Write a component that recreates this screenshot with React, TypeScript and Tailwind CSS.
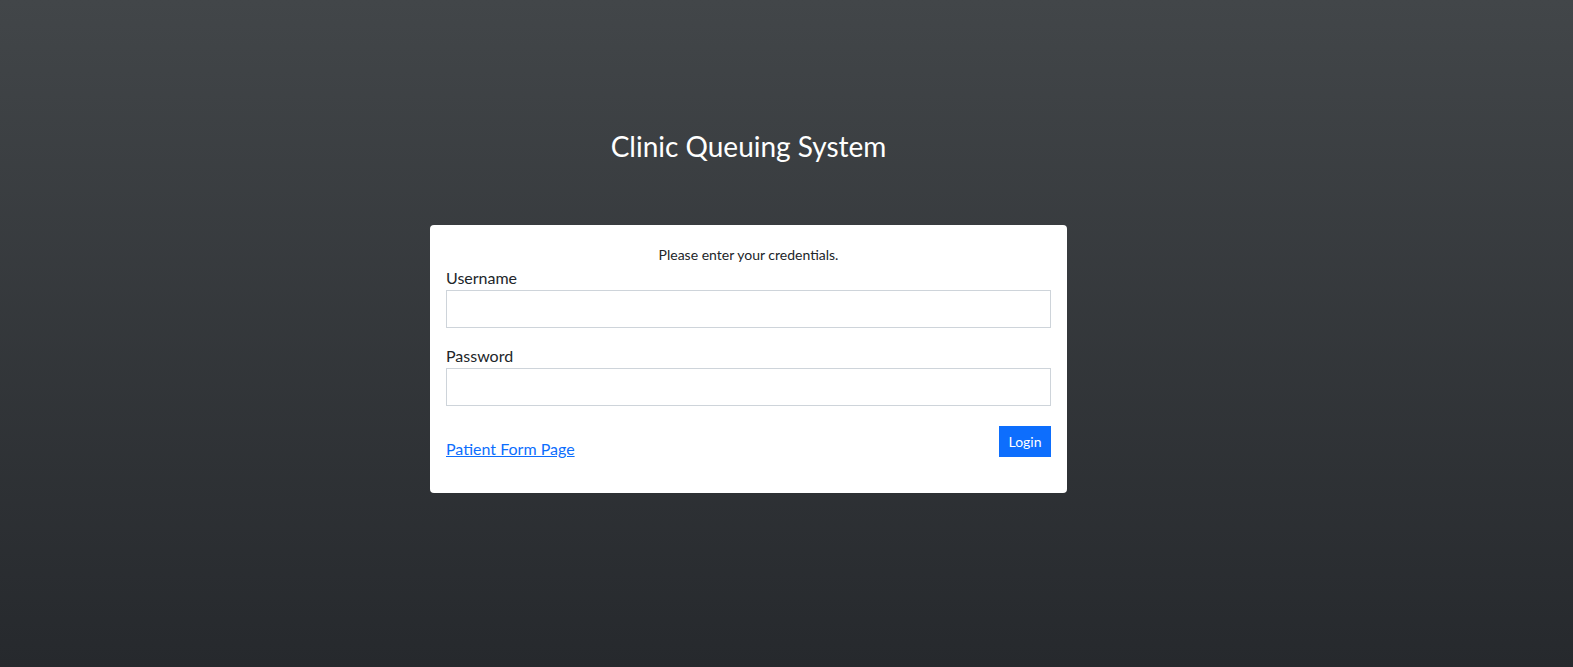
// Clinic Queuing System – login page

export default function App() {
  return (
    <div
      className="h-screen w-full bg-linear-to-b/srgb from-[#424649] to-[#26292d] text-[#212529]"
      style={{ fontFamily: 'Lato, "Noto Sans", sans-serif' }}
    >
      <div className="ml-[430px] w-[637px] pt-[129px]">
        <h3 className="text-center text-[28px] leading-[34px] font-normal text-white">
          Clinic Queuing System
        </h3>

        {/* Card */}
        <div className="mt-[62px] rounded bg-white px-4 pt-[19px] pb-[32px]">
          <p className="text-center text-sm leading-[21px]">Please enter your credentials.</p>

          <div className="mt-[1px]">
            <label className="block text-base leading-6">Username</label>
            <input
              type="text"
              className="block h-[38px] w-full border border-[#ced4da] bg-white px-3 outline-none"
            />
          </div>

          <div className="mt-4">
            <label className="block text-base leading-6">Password</label>
            <input
              type="password"
              className="block h-[38px] w-full border border-[#ced4da] bg-white px-3 outline-none"
            />
          </div>

          <div className="mt-5 flex items-start justify-between">
            <a href="#" className="mt-[11px] text-base leading-6 text-[#0d6efd] underline">
              Patient Form Page
            </a>
            <button className="h-[31px] w-[52px] bg-[#0d6efd] text-sm text-white">Login</button>
          </div>
        </div>
      </div>
    </div>
  )
}
